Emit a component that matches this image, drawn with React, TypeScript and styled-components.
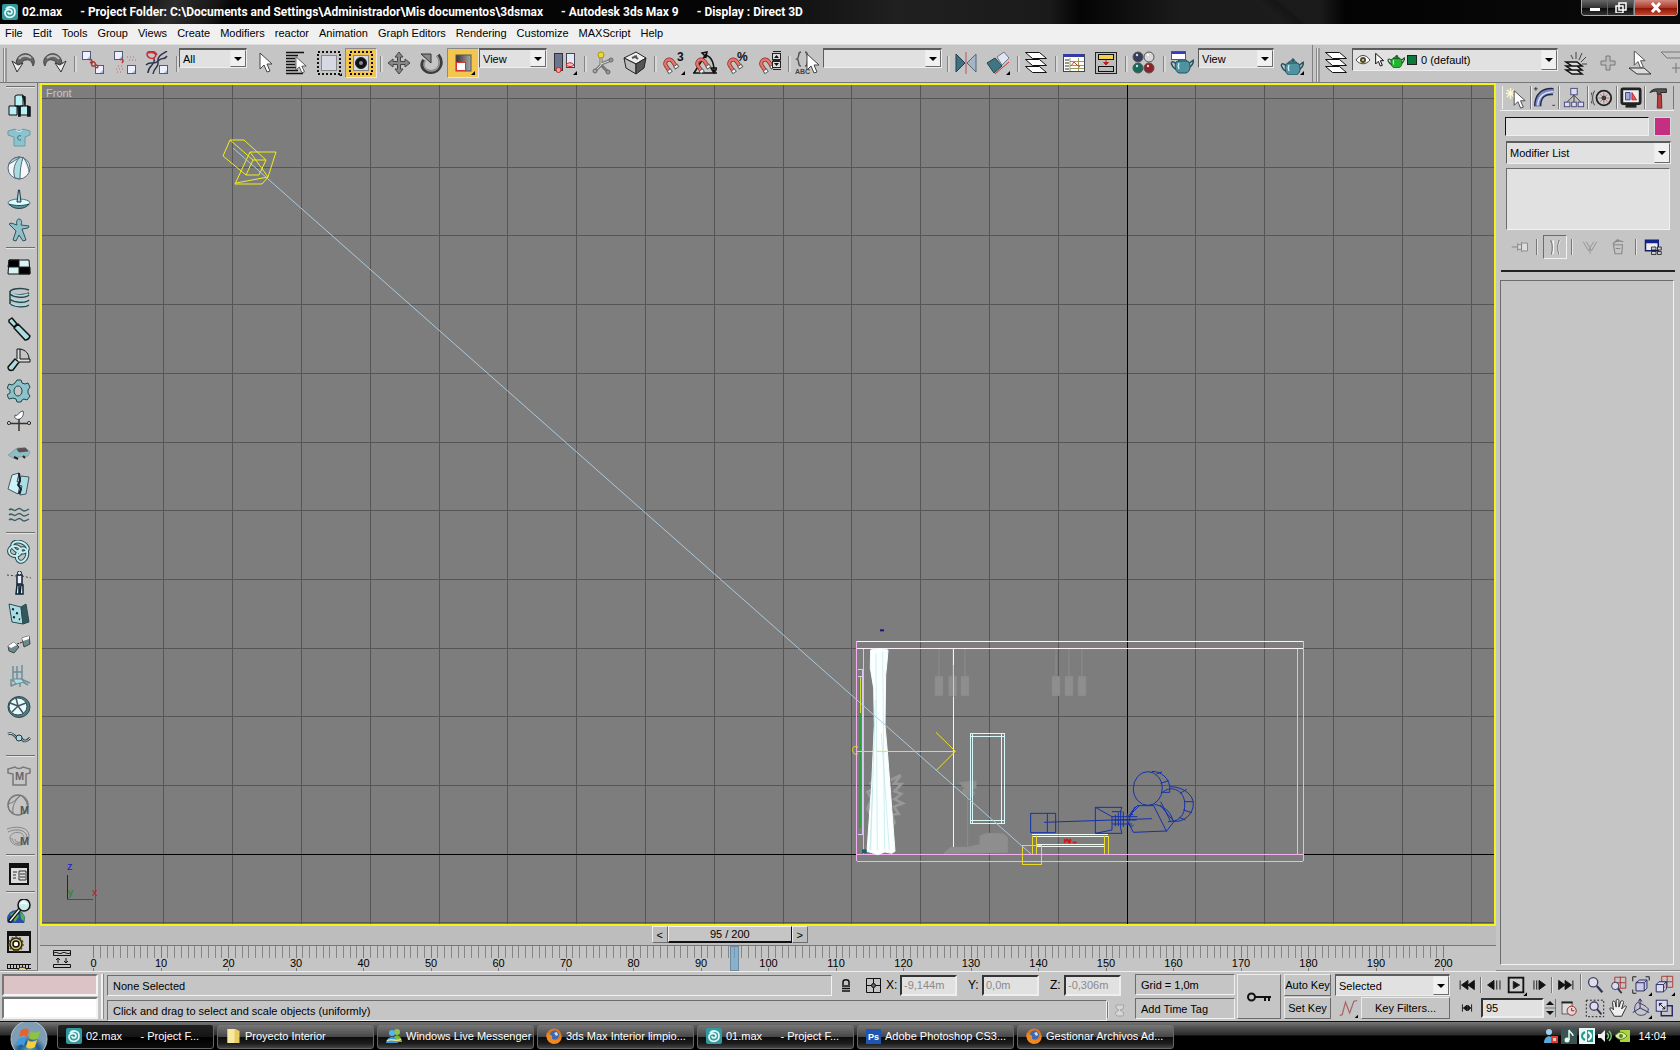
import React from 'react';
import styled, { createGlobalStyle, css } from 'styled-components';

const GlobalStyle = createGlobalStyle`
  *, *::before, *::after { box-sizing: border-box; }
  body { margin: 0; background: #c5c5c5; }
  body, button, input, select {
    font-family: "Liberation Sans", Arial, sans-serif;
    font-size: 11px;
    line-height: 14px;
    color: #000;
  }
  button { padding: 0; border: 0; background: none; cursor: default; white-space: nowrap; }
  svg { display: block; flex: none; }
`;

const sunken = css`
  border: 1px solid;
  border-color: #6c6c6c #f2f2f2 #f2f2f2 #6c6c6c;
`;
const raised = css`
  border: 1px solid;
  border-color: #ececec #6c6c6c #6c6c6c #ececec;
`;

const Page = styled.div`
  display: flex;
  flex-direction: column;
  min-height: 100vh;
  background: #c5c5c5;
  overflow: hidden;
`;

/* ---------- title and menu ---------- */
const TitleBar = styled.header`
  display: flex;
  align-items: flex-start;
  height: 24px;
  padding: 0 2px;
  color: #fff;
  background:
    linear-gradient(40deg, transparent 62%, #1c1c1c 64%, #151515 70%, transparent 72%) 1100px 0 / 260px 24px no-repeat,
    linear-gradient(115deg, transparent 12%, #2d2d2d 40%, #161616 62%, transparent 70%) 100px 0 / 180px 24px no-repeat,
    linear-gradient(90deg, #050505 0, #050505 700px, #202020 900px, #1a1a1a 1050px, #040404 1080px, #1b1b1b 1180px, #1b1b1b 1320px, #030303 1345px, #0a0a0a 100%);
`;
const TitleIcon = styled.div`
  padding-top: 4px;
  width: 20px;
`;
const TitleText = styled.h1`
  display: flex;
  flex: 1;
  gap: 18px;
  margin: 0;
  padding-top: 5px;
  font-family: Roboto, "Liberation Sans", sans-serif;
  font-size: 12px;
  line-height: 14px;
  font-weight: bold;
  white-space: pre;
`;
const WindowButtons = styled.div`
  display: flex;
  height: 16px;
  border: 1px solid #aaa;
  border-top: 0;
  border-radius: 0 0 4px 4px;
  overflow: hidden;
`;
const WindowButton = styled.button<{ $close?: boolean }>`
  display: grid;
  place-items: center;
  width: ${p => (p.$close ? 43 : 26)}px;
  border-left: ${p => (p.$close ? 1 : 0)}px solid #999;
  border-right: ${p => (p.$close ? 0 : 1)}px solid #666;
  background: ${p => (p.$close ? 'linear-gradient(#d08a80, #b23a28 50%, #8c1408 55%, #c2452d)' : 'linear-gradient(#666, #333 50%, #0a0a0a 55%, #333)')};
`;
const MenuBar = styled.nav`
  display: flex;
  align-items: center;
  gap: 10px;
  height: 20px;
  padding: 0 5px 2px;
  background: #f0f0f0;
`;

/* ---------- main toolbar ---------- */
const Toolbar = styled.div`
  display: flex;
  align-items: flex-start;
  height: 39px;
  border-top: 1px solid #dedede;
  border-bottom: 1px solid #777;
  overflow: hidden;
`;
const ToolGroup = styled.div<{ $last?: boolean }>`
  display: flex;
  flex: none;
  align-items: flex-start;
  height: 38px;
  padding: 3px ${p => (p.$last ? 0 : 4)}px 0 3px;
  border-right: ${p => (p.$last ? 0 : 1)}px solid #808080;
`;
const Grip = styled.span`
  width: 4px;
  height: 34px;
  border-left: 1px solid #888;
  border-right: 2px solid #999;
  background: #e2e2e2;
`;
const ToolButton = styled.button<{ $on?: boolean }>`
  display: grid;
  flex: none;
  place-items: center;
  width: 32px;
  height: 30px;
  ${p => p.$on && css`background: #f3c64f; border: 1px solid; border-color: #8a8a8a #e8e8e8 #e8e8e8 #8a8a8a;`}
`;
const ToolSep = styled.span`
  flex: none;
  width: 6px;
  height: 16px;
  margin-top: 8px;
  border-right: 2px solid #d8d8d8;
  background: linear-gradient(90deg, transparent 3px, #858585 3px);
`;
const SelectFrame = styled.span<{ $w?: number; $h?: number }>`
  display: flex;
  flex: none;
  align-items: stretch;
  width: ${p => (p.$w ? p.$w + 'px' : 'auto')};
  height: ${p => p.$h ?? 20}px;
  margin-right: ${p => (p.$w ? 2 : 0)}px;
  border: 1px solid;
  border-color: #5c5c5c #eee #eee #5c5c5c;
  border-top-width: 2px;
  background: #e1e1e1;
`;
const SelectInput = styled.select`
  flex: 1;
  min-width: 0;
  appearance: none;
  border: 0;
  outline: 0;
  padding: 0 3px;
  background: transparent;
`;
const SelectArrow = styled.span`
  display: grid;
  place-items: center;
  width: 16px;
  ${raised}
  background: #f0f0f0;
  pointer-events: none;
`;
const LayerMarks = styled.span`
  display: flex;
  align-items: center;
  padding-left: 2px;
`;

/* ---------- middle ---------- */
const Middle = styled.div`
  display: flex;
  flex: 1;
  min-height: 0;
`;
const Rail = styled.aside`
  display: flex;
  flex-direction: column;
  flex: none;
  width: 38px;
  height: calc(100vh - 162px);
  padding: 1px 0 0 2px;
  border-right: 1px solid #777;
  border-bottom: 1px solid #888;
  overflow: hidden;
`;
const RailButton = styled.button`
  display: grid;
  flex: none;
  place-items: center;
  width: 34px;
  height: 31px;
`;
const RailSep = styled.span`
  flex: none;
  height: 6px;
  margin: 0 2px 0 4px;
  background: linear-gradient(transparent 2px, #6e6e6e 2px, #6e6e6e 3px, #e4e4e4 3px, #e4e4e4 4px, transparent 4px);
`;
const Center = styled.main`
  display: flex;
  flex: 1;
  flex-direction: column;
  min-width: 0;
  padding-left: 2px;
`;
const Viewport = styled.section`
  position: relative;
  flex: 1;
  min-height: 0;
  background: #7d7d7d;
  border: 2px solid #f4f41c;
`;
const ViewLabel = styled.span`
  position: absolute;
  top: 1px;
  left: 4px;
  color: #c6c6c6;
`;
const Scene = styled.svg`
  width: 100%;
  height: 100%;
`;
const SliderRow = styled.div`
  display: flex;
  height: 19px;
  padding-right: 12px;
  background: #bdbdbd;
`;
const SliderStep = styled.button`
  width: 16px;
  height: 17px;
  ${raised}
`;
const SliderThumb = styled.button`
  width: 124px;
  height: 17px;
  border: 1px solid;
  border-color: #f0f0f0 #111 #111 #f0f0f0;
  border-bottom-width: 2px;
  background: #c5c5c5;
  line-height: 12px;
`;
const TrackBar = styled.div`
  display: flex;
  height: 26px;
  border-top: 1px solid #777;
`;
const TrackToggle = styled.button`
  display: grid;
  place-items: center;
  width: 43px;
`;
const Ticks = styled.div`
  display: flex;
  flex: 1;
  justify-content: space-between;
  margin: 0 52px 0 10px;
`;
const Tick = styled.div<{ $major?: boolean }>`
  position: relative;
  display: flex;
  flex-direction: column;
  align-items: center;
  width: 1px;
  height: ${p => (p.$major ? 25 : 12)}px;
  background: ${p => (p.$major ? 'linear-gradient(#7a7a7a 12px, transparent 12px, transparent 22px, #7a7a7a 22px)' : '#858585')};
  line-height: 12px;
  padding-top: 11px;
`;
const FrameMark = styled.span`
  position: absolute;
  top: 0;
  left: -4px;
  width: 9px;
  height: 25px;
  border: 1px solid #6b8ba0;
  background: rgba(110, 165, 205, 0.65);
`;

/* ---------- command panel ---------- */
const Panel = styled.aside`
  display: flex;
  flex: none;
  flex-direction: column;
  width: 184px;
  padding: 3px 6px 5px 4px;
  border-bottom: 1px solid #888;
`;
const Tabs = styled.div`
  display: flex;
  height: 25px;
  padding-left: 2px;
  border-bottom: 1px solid #eee;
`;
const Tab = styled.button`
  display: grid;
  place-items: center;
  flex: 0 1 29px;
  height: 23px;
  border-right: 1px solid #777;
  border-left: 1px solid #eee;
`;
const NameRow = styled.div`
  display: flex;
  gap: 5px;
  padding: 6px 3px 5px 5px;
`;
const NameInput = styled.input`
  flex: 1;
  min-width: 0;
  height: 19px;
  border: 1px solid;
  border-color: #111 #eee #eee #111;
  background: #e1e1e1;
`;
const Swatch = styled.button`
  width: 17px;
  height: 19px;
  background: #c42f82;
  border: 1px solid #d9d9d9;
`;
const PanelBlock = styled.div`
  display: flex;
  flex-direction: column;
  padding: 0 3px 0 6px;
`;
const StackList = styled.div`
  height: 62px;
  margin: 4px 1px 0 0;
  ${sunken}
  background: #e1e1e1;
`;
const StackTools = styled.div`
  display: flex;
  align-items: center;
  justify-content: space-between;
  height: 42px;
  padding: 0 10px 7px 7px;
  border-bottom: 2px solid #222;
  margin: 0 -1px 0 1px;
`;
const StackButton = styled.button<{ $boxed?: boolean }>`
  display: grid;
  place-items: center;
  width: 24px;
  height: 24px;
  ${p => p.$boxed && css`${sunken}`}
`;
const StackSep = styled.span`
  flex: none;
  width: 2px;
  height: 16px;
  border-left: 1px solid #777;
  border-right: 1px solid #e4e4e4;
`;
const Rollout = styled.div`
  flex: 1;
  margin-top: 8px;
  ${sunken}
`;

/* ---------- status bar ---------- */
const Status = styled.footer`
  display: flex;
  height: 50px;
  padding: 2px 5px 2px 2px;
  border-top: 1px solid #eee;
`;
const Column = styled.div<{ $w?: number; $gap?: number }>`
  display: flex;
  flex-direction: column;
  flex: ${p => (p.$w ? 'none' : 1)};
  min-width: 0;
  width: ${p => (p.$w ? p.$w + 'px' : 'auto')};
  gap: ${p => p.$gap ?? 1}px;
`;
const Row = styled.div<{ $gap?: number }>`
  display: flex;
  align-items: center;
  gap: ${p => p.$gap ?? 0}px;
  height: 22px;
`;
const Listener = styled.input<{ $tone: string }>`
  width: 96px;
  height: 22px;
  border: 2px solid;
  border-color: #777 #f4f4f4 #f4f4f4 #777;
  background: ${p => p.$tone};
`;
const StatusGrip = styled.span`
  flex: none;
  width: 9px;
  background: linear-gradient(90deg, transparent 3px, #f2f2f2 3px, #f2f2f2 5px, #888 5px, #888 6px, transparent 6px);
`;
const Readout = styled.div`
  flex: 1;
  height: 21px;
  padding: 3px 5px 2px;
  ${sunken}
  white-space: nowrap;
`;
const Coords = styled.div`
  display: flex;
  gap: 11px;
  padding-right: 10px;
`;
const Coord = styled.label`
  display: grid;
  grid-template-columns: 13px 57px;
  align-items: center;
  gap: 1px;
  font-size: 12px;
`;
const CoordInput = styled.input`
  width: 57px;
  height: 21px;
  padding: 0 2px;
  border: 2px solid;
  border-color: #333 #eee #eee #333;
  background: #e1e1e1;
  color: #8a8a8a;
`;
const IconSlot = styled.button<{ $w: number }>`
  display: grid;
  flex: none;
  place-items: center;
  width: ${p => p.$w}px;
  height: 22px;
`;
const PushButton = styled.button<{ $tall?: boolean; $w?: number }>`
  display: grid;
  place-items: center;
  flex: none;
  width: ${p => (p.$w ? p.$w + 'px' : '100%')};
  height: ${p => (p.$tall ? 45 : 22)}px;
  ${raised}
`;
const Spacer = styled.span<{ $w: number }>`
  flex: none;
  width: ${p => p.$w}px;
`;
const FrameInput = styled.input`
  width: 63px;
  height: 20px;
  padding: 0 3px;
  border: 2px solid;
  border-color: #333 #eee #eee #333;
  background: #e1e1e1;
`;

/* ---------- taskbar ---------- */
const Taskbar = styled.footer`
  display: flex;
  align-items: center;
  gap: 3px;
  height: 29px;
  padding: 0 14px 0 8px;
  border-top: 1px solid #111;
  color: #fff;
  background: linear-gradient(#777 0, #4c4c4c 6px, #2a2a2a 13px, #000 14px, #000 100%);
`;
const StartButton = styled.button`
  flex: none;
  width: 46px;
  height: 28px;
`;
const TaskButton = styled.button<{ $active?: boolean }>`
  display: flex;
  flex: 0 1 157px;
  align-items: center;
  gap: 4px;
  min-width: 0;
  height: 25px;
  padding: 0 8px;
  border: 1px solid #666;
  border-radius: 3px;
  color: #fff;
  white-space: pre;
  background: ${p => (p.$active
    ? 'linear-gradient(#222, #151515 50%, #000 54%, #0c0c0c)'
    : 'linear-gradient(#777, #484848 50%, #0d0d0d 54%, #1c1c1c 80%, #444)')};
`;
const Tray = styled.div`
  display: flex;
  align-items: center;
  gap: 2px;
  margin-left: auto;
`;
const Clock = styled.time`
  padding-left: 5px;
`;

/* ---------- icons ---------- */
type IconProps = { children: React.ReactNode; s?: number; box?: string };
const I = ({ children, s = 24, box = '0 0 24 24' }: IconProps) => (
  <svg width={s} height={s} viewBox={box} fill="none" stroke="#222" strokeWidth="1" aria-hidden="true">{children}</svg>
);
const Down = () => <svg width="8" height="4" viewBox="0 0 8 4" aria-hidden="true"><path d="M0 0h8L4 4z" fill="#000" /></svg>;
const Corner = () => <path d="M24 20v4h-4z" fill="#000" stroke="none" />;
const teal = '#a9dde2';

const Undo = ({ flip = false }) => (
  <I><g transform={flip ? 'matrix(-1 0 0 1 24 0)' : undefined}>
    <path d="M5 12C6 3 14 1 19 4c5 3 5 8 3 11-1-5-4-7-7-6-3 0-4 2-5 5z" fill="#666" stroke="#444" />
    <path d="M8 8c3-4 8-4 12-1" stroke="#bbb" strokeWidth="2" />
    <path d="M1 10l5 11 6-9-5 2z" fill="#eee" stroke="#333" />
  </g></I>
);
const Sq = ({ x, y }: { x: number; y: number }) => (
  <g><rect x={x + 0.5} y={y + 0.5} width="8" height="8" fill="#eef0ff" stroke="#55597c" /><path d={`M${x + 5} ${y + 8}l3-3v3z`} fill="#a8b4da" stroke="none" /></g>
);
const Link = () => <I><Sq x={1} y={0} /><Sq x={14} y={14} /><path d="M8 9c3-2 4 2 1 3M11 11c3-1 5 3 2 4s-3-3-1-4M15 14c3 1 2 4-1 2" stroke="#a63a3a" strokeWidth="1.5" /></I>;
const Unlink = () => <I><Sq x={1} y={0} /><Sq x={14} y={14} /><path d="M7 9c3-2 4 1 2 3" stroke="#b33" strokeWidth="1.5" /><path d="M14 6h8M16 9h7M5 15h6M3 18h7M4 21h5" stroke="#bd6666" strokeDasharray="1 2" /></I>;
const Bind = () => <I><path d="M2 2c8-2 10 2 8 4-2 3-8 1-8-3s8-4 10 1" stroke="#c92c35" strokeWidth="1.5" /><path d="M3 22c0-8 8-8 6-14M8 23c1-7 6-6 5-12s4-8 9-11M1 14c5-5 7 1 12-4s6 0 9-5" stroke="#30344e" strokeWidth="1.5" /><Sq x={14} y={14} /></I>;
const Arrow = ({ x = 0, y = 0 }) => <path d={`M${x + 7} ${y + 2}v16l4-4 3 7 3-1-3-7h5z`} fill="#fff" stroke="#444" />;
const ByName = () => <I><path d="M1 1.5h18M1 4.5h12M1 7.5h9M1 10.5h9M1 13.5h9M1 16.5h10M1 19.5h12M1 22.5h17" stroke="#111" strokeWidth="1.5" /><g transform="translate(5 4) scale(.85)"><Arrow /></g></I>;
const Region = ({ on = false }) => (
  <I s={26} box="0 0 26 26">
    <rect x="2" y="2" width="22" height="22" stroke="#111" strokeWidth="2" strokeDasharray="2 2" />
    <rect x="5.5" y="5.5" width="15" height="15" fill="#d6d8e4" stroke="#888" />
    {on && <><circle cx="13" cy="13" r="5.5" fill="#111" /><circle cx="13" cy="13" r="2" fill="#889" stroke="none" /></>}
    {!on && <path d="M26 23v3h-3z" fill="#000" stroke="none" />}
  </I>
);
const Move = () => <I><path d="M12 1l4 5h-2.500v4.500H18V8l5 4-5 4v-2.500h-4.500V18H16l-4 5-4-5h2.500v-4.500H6V16l-5-4 5-4v2.500h4.500V6H8z" fill="#888" stroke="#444" /></I>;
const Rotate = () => <I><path d="M5 9c-4 6 0 12 7 12 8 0 13-9 7-17" stroke="#3c3c3c" strokeWidth="4" /><path d="M6 10c-3 5 1 10 6 10 7 0 11-8 6-15" stroke="#999" strokeWidth="1.500" /><path d="M2 3h10v9z" fill="#888" stroke="#333" /></I>;
const Scale = () => <I><defs><linearGradient id="sc"><stop stopColor="#333" /><stop offset="1" stopColor="#aaa" /></linearGradient></defs><rect x="5" y="4" width="15" height="16" fill="url(#sc)" stroke="#555" /><rect x="5.5" y="11.5" width="9" height="8" fill="#fff" stroke="#d33" /><Corner /></I>;
const Pivot = () => <I><rect x="1.5" y="2.500" width="8" height="17" fill="#6b7592" stroke="#333" /><rect x="13.5" y="2.500" width="8" height="14" fill="#e5e8f7" stroke="#445" /><circle cx="5.500" cy="19" r="2.500" fill="#f7a0a0" stroke="#c22" /><path d="M13 14c2-3 6-3 8 0-2 2-6 2-8 0z" fill="#fbb" stroke="#c22" /><Corner /></I>;
const Manip = () => <I><path d="M10 6v8l-6 6M10 13l10-4M10 14l7 7" stroke="#777" strokeWidth="3" /><path d="M10 6v8l-6 6M10 13l10-4" stroke="#ddd" /><circle cx="10" cy="4" r="3" fill="#ecd735" stroke="#a90" /><circle cx="20" cy="9" r="2" fill="#999" stroke="#666" /><circle cx="4" cy="20" r="2" fill="#aaa" stroke="#666" /><circle cx="17" cy="21" r="2" fill="#999" stroke="#666" /></I>;
const KeyCube = () => <I><path d="M1 7l12-6 10 6-10 6z" fill="#eee" /><path d="M1 7l12 6v10L3 17z" fill="#bbb" /><path d="M13 13l10-6-2 10-8 6z" fill="#555" /><path d="M9 7l5-2M11 5l4 3" stroke="#555" strokeWidth="2" /></I>;
const Magnet = ({ kind }: { kind: string }) => (
  <I>
    {kind === 'angle' && <path d="M1 22L13 3M0 22h24M11 4c6 0 10 6 10 16M9 2l5-1-1 5zM18 17l3 5 3-5z" stroke="#111" strokeWidth="1.500" />}
    <g transform="rotate(-35 8 14)">
      <path d="M5 20v-7a4 4 0 0 1 8 0v7" stroke="#862c28" strokeWidth="4" />
      <path d="M5 19v-6a4 4 0 0 1 8 0v6" stroke="#e5766c" strokeWidth="2.500" />
      <path d="M3 18h4v3H3zM11 18h4v3h-4z" fill="#fff" stroke="#666" />
    </g>
    {kind === '3' && <><text x="16" y="10" fontSize="12" fontWeight="bold" fill="#111" stroke="none">3</text><Corner /></>}
    {kind === '%' && <text x="12" y="10" fontSize="12" fontWeight="bold" fill="#111" stroke="none">%</text>}
    {kind === 'spin' && <><path d="M16 .500h8M16 18.500h8M15.500 9.500h8" stroke="#222" /><rect x="15.500" y="2.500" width="8" height="6" fill="#ddd" /><rect x="15.500" y="10.500" width="8" height="6" fill="#ddd" /><path d="M17 7l2.500-3L22 7zM17 12h5l-2.500 3z" fill="#111" stroke="none" /></>}
  </I>
);
const NamedSets = () => <I><path d="M6 1C2 1 5 7 2 8c3 1 0 7 4 7M10 1c4 0 1 6 4 7-3 1 0 7-4 7" stroke="#555" strokeWidth="1.5" /><text x="0" y="23" fontSize="7" fontWeight="bold" fill="#444" stroke="none">ABC</text><Arrow x={5} y={1} /></I>;
const Mirror = () => <I><path d="M2 3l9 9-9 9z" fill="#3d7183" stroke="#223f4a" /><path d="M22 3l-9 9 9 9z" fill="#a4b6c6" stroke="#567" /><path d="M12 1v22" stroke="#b55" /></I>;
const Align = () => <I><path d="M1 12l8-5 7 8-8 7z" fill="#3f7584" stroke="#244" /><path d="M11 6l7-5 5 6-7 7z" fill="#dde6f2" stroke="#778" /><path d="M9 23l14-12" stroke="#c33" /><Corner /></I>;
const Layers = () => <I><g fill="#fff" stroke="#111" strokeLinejoin="round"><path d="M1.500 15.500h14l7 6h-14z" /><path d="M1.500 8.500h14l7 6h-14z" /><path d="M1.500 1.500h14l7 6h-14z" /></g></I>;
const CurveEd = () => <I><rect x="1.500" y="3.500" width="21" height="17" fill="#fff" stroke="#445" /><path d="M2 4.500h20" stroke="#343aa8" strokeWidth="3" /><path d="M3 9h4M3 12h4M3 15h4M3 18h4" stroke="#333" /><path d="M8 7v13M8 10.500h14M8 14.500h14M8 17.500h14M16.500 7v13" stroke="#9a9a5a" /><path d="M9 15l3-4 3 3 3 2" stroke="#c42" /></I>;
const Schematic = () => <I><rect x="1.500" y="1.500" width="21" height="21" fill="#bdbdbd" stroke="#222" /><rect x="4.500" y="3.500" width="15" height="5" fill="#f2d24a" stroke="#111" /><rect x="4.500" y="15.500" width="15" height="5" fill="#bbb" stroke="#111" /><path d="M12 9v3M9.500 11.500h5L12 14z" fill="#b22" stroke="#b22" /></I>;
const Mats = () => <I>{[['#343c5c', 6, 6], ['#d9d9d9', 17, 6], ['#17695c', 6, 17], ['#8f2228', 17, 17]].map(([c, x, y]) => <g key={String(c)}><circle cx={x} cy={y} r="5" fill={String(c)} stroke="#555" /><circle cx={Number(x) - 1} cy={Number(y) - 2} r="1.200" fill="#fff" stroke="none" opacity=".8" /></g>)}</I>;
const Pot = ({ c = '#4f93a3', e = '#24515e' }) => <g><path d="M6 13c-3-4-6-2-4 1 1 3 3 4 6 5M19 12c2 0 3-3 5-3-1 4-3 7-6 8" stroke={e} strokeWidth="1.500" /><path d="M6 11c-2 6 0 10 3 11h7c4-1 5-6 3-11-3-2-10-2-13 0z" fill={c} stroke={e} /><path d="M8 10c1-3 8-3 9 0zM12 6h2v2h-2z" fill={c} stroke={e} /><path d="M9 12c-1 2-1 4 0 6" stroke="#cfe9ee" strokeWidth="1.500" /></g>;
const Render = () => <I><Pot /><rect x="1.500" y="0.500" width="14" height="8" fill="#fff" stroke="#556" /><path d="M2 2h13" stroke="#3c3bbd" strokeWidth="2" /></I>;
const Quick = () => <I><g transform="translate(0 2)"><Pot /></g><Corner /></I>;
const LayerNew = () => <I><path d="M2 19h11l5 4H8zM2 15h11l5 4H8zM2 11h11l5 4H8z" fill="#ddd" stroke="#111" strokeWidth="1.500" /><path d="M12 8V1M15 9l3-7M17 11l5-5M18 13h5M9 8L7 4" stroke="#444" /></I>;
const Plus = () => <I><path d="M10 5h4v5h5v4h-5v5h-4v-5H5v-4h5z" fill="#bbb" stroke="#777" /></I>;
const LayerPick = () => <I><path d="M1 17h15l7 6H9z" fill="#ddd" stroke="#333" /><g transform="translate(0 -2) scale(.9)"><Arrow /></g></I>;
const LayerHi = () => <I><path d="M1 1h20M1 1l6 6h14M16 12v10M12 17h8" stroke="#777" /></I>;

const G = ({ children }: { children: React.ReactNode }) => <g stroke="#2a4a52" fill={teal} strokeLinejoin="round">{children}</g>;
const rail: Record<string, React.ReactNode> = {
  boxes: <><path d="M8 2l2-1h6v11H8zM2 12h8v9H2zM13 12h8v9h-8z" fill="#b9f0f4" stroke="#111" /><path d="M15 2l3 1v9M10 12l3 1v9h-2M20 12l3 1v9h-3" fill="#123" stroke="#111" strokeWidth="1.500" /></>,
  shirt: <G><path d="M8 4c2 2 6 2 8 0l7 2v4l-5 2v9H7v-9l-6-2V6z" fill="#8cc4ce" stroke="#6b9aa5" /><path d="M9 5c2 2 4 2 6 0" stroke="#dff" fill="none" /><path d="M14 11c-4-2-5 5 0 4" fill="none" stroke="#3b6a74" /></G>,
  ball: <G><circle cx="12" cy="12" r="11" fill="#f4f8f8" stroke="#567" /><path d="M13 1C8 6 5 14 8 22l5 1c0-8 1-16 3-21zM2 8c4-2 8-5 11-7-4 0-9 2-11 7zM16 1c4 5 6 11 6 15" stroke="#567" /></G>,
  top: <G><ellipse cx="12" cy="16" rx="11" ry="4" fill="#dff" stroke="#4c7882" /><path d="M2 17c4 6 16 6 20 0-6 2-14 2-20 0z" fill="#5c929c" /><path d="M11.500 3l-1.500 12h4l-1.500-12z" stroke="#234" /></G>,
  man: <G><path d="M12 1c3 0 3 4 2 6l8 1-1 2-6 1 4 11-3 1-4-6-3 6-3-1 3-9-7-7 2-1 6 2c-1-3 0-6 2-6z" fill="#8fc0c9" stroke="#2d5560" /></G>,
  checker: <><path d="M2 5h20l1 14H1z" fill="#d7f3f5" stroke="#111" /><path d="M2 5h10v7H1zM12 12h11v7H12z" fill="#000" /></>,
  spring: <G><path d="M22 4C14 1 3 3 3 6s14 4 19 1M3 7c0 4 15 6 19 2M3 12c0 4 15 6 19 2M3 16c0 5 15 6 19 3M3 5v13" fill="none" stroke="#26454c" strokeWidth="1.500" /><path d="M4 7c5 3 12 3 17 1M4 12c5 3 12 3 17 1M4 17c5 3 12 3 17 1" fill="none" stroke={teal} strokeWidth="1.500" /></G>,
  damper: <G><path d="M2 3l3-2 5 6-3 3-5-5zM7 11l4-4 12 12c-1 3-3 4-5 4z" stroke="#111" strokeWidth="1.500" /></G>,
  hinge: <G><path d="M1 19l7-8 4 3-6 8c-3 1-5 0-5-3z" stroke="#111" strokeWidth="1.500" /><path d="M10 11V1h3v10h10v3H12" fill="#ddd" stroke="#111" /><path d="M13 1c6 1 9 5 9 10" fill="none" stroke="#111" /></G>,
  gear: <G><path d="M10 1h4l1 3 3 1 3-1 2 4-2 3v3l2 3-3 4-3-1-2 1-1 2h-4l-1-3-3-1-4 1-2-4 3-2v-3L0 9l2-4 3 1 3-2z" fill="#8cc2cb" stroke="#244" /><ellipse cx="11" cy="12" rx="4" ry="5" fill="#c5c5c5" stroke="#244" /></G>,
  vane: <><path d="M8 5c3 2 3-3 8-4 1 3 0 6-3 8-4 1-6-1-5-4z" fill="#fff" stroke="#456" /><path d="M12 9v12M0 13.500h24" stroke="#333" strokeWidth="1.500" /><circle cx="2" cy="13" r="1.500" fill="#fff" /><circle cx="22" cy="13" r="1.500" fill="#fff" /></>,
  car: <G><path d="M1 14c4-2 6-6 10-7h8l4 4-2 4-9 1-6 1z" fill="#8dbdc7" stroke="#8b9fa6" /><path d="M10 8l8-1 3 3-9 1z" fill="#634b50" stroke="#555" /><path d="M7 16l4 2M16 15l2 2" stroke="#222" strokeWidth="2" /></G>,
  brick: <G><path d="M5 3l7-2-2 9 4-1-3 13-10-5z" fill="#cdf3f6" stroke="#456" /><path d="M14 4l8 1-3 17-6 1 2-9-3-1z" stroke="#456" /><path d="M12 1l1 8-2 4 3 4-2 5" fill="none" stroke="#123" strokeWidth="2" /></G>,
  waves: <path d="M2 7c3-3 4 2 7 0s4-2 6 0 4 1 7-1M2 12c3-3 4 2 7 0s4-2 6 0 4 1 7-1M2 17c3-3 4 2 7 0s4-2 6 0 4 1 7-1" stroke="#3f5f66" strokeWidth="1.500" />,
  knot: <G><g fill="none" strokeWidth="4"><ellipse cx="13" cy="7" rx="8" ry="5" transform="rotate(20 13 7)" /><ellipse cx="8" cy="11" rx="6" ry="5" /><ellipse cx="15" cy="15" rx="5" ry="7" transform="rotate(20 15 15)" /></g><g fill="none" stroke="#c4eef0" strokeWidth="2"><ellipse cx="13" cy="7" rx="8" ry="5" transform="rotate(20 13 7)" /><ellipse cx="8" cy="11" rx="6" ry="5" /><ellipse cx="15" cy="15" rx="5" ry="7" transform="rotate(20 15 15)" /></g></G>,
  ragdoll: <><path d="M0 4l9 1M15 5l9 2" stroke="#444" strokeDasharray="2 2" /><path d="M10 4h5v9h-5z" fill="#eef" stroke="#123" strokeWidth="1.500" /><circle cx="12.500" cy="2" r="2" fill="#eef" stroke="#123" /><path d="M10 14h2v9H9zM14 14h2v9h-3z" fill="#dff" stroke="#123" strokeWidth="1.500" /></>,
  wall: <G><path d="M2 2l12 3 2 17L5 20z" /><path d="M14 5l5-3 3 18-6 2z" fill="#34575f" /><path d="M5 7l2 .5M9 11l2 .5M6 15l2 .5M12 17l1 .5" stroke="#123" strokeWidth="2" /></G>,
  cubes: <><path d="M1 13l6-4 5 5-5 6-5-2zM15 5l7-2 1 8-6 3z" fill="#6b898f" stroke="#444" /><path d="M1 13l6-4 3 3-6 3zM15 5l7-2v3l-6 2z" fill="#fff" stroke="none" /><path d="M10 11l6-2" strokeDasharray="2 1" /></>,
  chair: <G><path d="M6 2v15M10 2v14M15 1v15M6 8h9M5 17l9-2 9 4M4 15v7l9-4v5M13 16l8 5" fill="none" stroke="#6b8f97" strokeWidth="1.500" /><path d="M6 15h8l3 3-8 2z" stroke="#6b8f97" /></G>,
  wheel: <G><ellipse cx="12" cy="12" rx="11" ry="10.500" fill="#567a82" /><ellipse cx="11" cy="11.500" rx="9" ry="8.500" fill="#e8fafb" /><path d="M11 11L9 3M11 11l8-3M11 11l5 7M11 11l-6 6M11 11L3 8" stroke="#456" strokeWidth="1.500" /></G>,
  rope: <><path d="M1 8c5-2 6 2 9 4M14 12c3 5 6 3 9 0" stroke="#2a3b40" strokeWidth="2.500" /><path d="M1 8c5-2 6 2 9 4M14 12c3 5 6 3 9 0" stroke="#cde" /><circle cx="12" cy="12" r="3" fill={teal} stroke="#234" /></>,
  mshirt: <><path d="M8 4c2 2 6 2 8 0l7 2v4l-4 1v11H6V11l-5-1V6z" stroke="#777" strokeWidth="1.500" /><text x="8" y="17" fontSize="11" fontWeight="bold" fill="#666" stroke="none">M</text></>,
  mball: <><circle cx="11" cy="11" r="10" stroke="#777" strokeWidth="1.500" /><path d="M14 1C8 6 5 12 6 19M1 10c5-1 9-5 12-9M14 1c3 3 6 7 6 10" stroke="#777" /><text x="13" y="20" fontSize="11" fontWeight="bold" fill="#555" stroke="none">M</text></>,
  mrope: <><path d="M0 4c8-3 22-3 22 7 0 12-19 12-19 2 0-7 14-8 14 0 0 5-9 6-9 1M1 7c5-3 18-4 19 5 0 9-15 9-15 1" stroke="#888" /><text x="13" y="20" fontSize="11" fontWeight="bold" fill="#555" stroke="none">M</text></>,
  props: <><rect x="3" y="2" width="18" height="20" fill="#ddd" stroke="#111" strokeWidth="2" /><path d="M3 4h18" stroke="#111" strokeWidth="4" /><path d="M6 10h4M6 13h3M6 16h3M12 9h7v9h-7zM13 12h5M13 15h5" stroke="#333" /></>,
  look: <><circle cx="9" cy="20" r="9" fill="#2e4ea5" stroke="none" /><path d="M3 15l6-3 3 5-4 6zM13 13l4 3 1 7-4-3z" fill="#49b14f" stroke="none" /><path d="M13 10L2 23" stroke="#111" strokeWidth="4" /><path d="M13 10L3 22" stroke="#eee" strokeWidth="1.500" /><circle cx="17" cy="6" r="6" fill="#c7eeee" stroke="#111" strokeWidth="1.500" /><path d="M14 5c2-3 4-1 6 0" stroke="#fff" strokeWidth="2" /></>,
  camera: <><rect x="1" y="2" width="22" height="20" fill="#ccc" stroke="#111" strokeWidth="2" /><path d="M1 4h22" stroke="#111" strokeWidth="4" /><circle cx="9" cy="14" r="6" fill="#dfc666" stroke="#222" strokeWidth="1.500" /><circle cx="9" cy="14" r="7" stroke="#5b4c14" strokeDasharray="2 2" strokeWidth="1.500" /><circle cx="9" cy="14" r="3" fill="#fff" stroke="#111" strokeWidth="1.500" /></>,
  film: <><path d="M0 3.500h24M0 7.500h24" stroke="#111" /><path d="M0 5.500h24" stroke="#111" strokeDasharray="1 2" strokeWidth="3" /><path d="M11 8c3-3 8-2 10 2l-6 5z" fill="#e8cf86" stroke="#222" /></>,
};
const railGroups = [
  ['boxes', 'shirt', 'ball', 'top', 'man'],
  ['checker', 'spring', 'damper', 'hinge', 'gear', 'vane', 'car', 'brick', 'waves'],
  ['knot', 'ragdoll', 'wall', 'cubes', 'chair', 'wheel', 'rope'],
  ['mshirt', 'mball', 'mrope'],
  ['props'],
  ['look', 'camera', 'film'],
];

const tabs: [string, React.ReactNode][] = [
  ['Create', <><path d="M6 1v12M1 7h11M2 3l8 8M10 3l-8 8" stroke="#fff8cc" strokeWidth="1.500" /><g transform="translate(3 2)"><Arrow /></g></>],
  ['Modify', <><path d="M4 21C4 9 11 4 21 5" stroke="#23284a" strokeWidth="8" /><path d="M4 21C4 9 11 4 21 5" stroke="#7f8bc0" strokeWidth="5" /><path d="M4 20C5 10 10 6 21 5" stroke="#dfe4ff" strokeWidth="1.500" /><path d="M0 2h4M2 0v4M20 20h3" stroke="#333" /></>],
  ['Hierarchy', <><path d="M12 8v10M12 9L4 17M12 9l8 8" stroke="#333" /><rect x="8.500" y="1.500" width="7" height="7" fill="#d9dbf3" stroke="#447" /><rect x="1.500" y="16.500" width="6" height="5" fill="#d9dbf3" stroke="#447" /><rect x="9.500" y="16.500" width="5" height="5" fill="#d9dbf3" stroke="#447" /><rect x="16.500" y="16.500" width="6" height="5" fill="#d9dbf3" stroke="#447" /></>],
  ['Motion', <><circle cx="14" cy="12" r="8" stroke="#222" strokeWidth="2" fill="#ccc" /><path d="M14 6v12M8 12h12M10 8l8 8M18 8l-8 8" stroke="#b66" /><circle cx="14" cy="12" r="2" fill="#444" /><path d="M4 4c-3 5-3 11 0 16M1 6c-2 4-2 8 0 12" stroke="#333" /></>],
  ['Display', <><rect x="2" y="2" width="20" height="16" rx="1" fill="#eee" stroke="#222" strokeWidth="3" /><path d="M6 6h5v8H6z" fill="#aac" stroke="#33a" /><path d="M13 14V6l5 8z" fill="#e55" stroke="#b22" /><path d="M6 21h12" stroke="#222" strokeWidth="3" /></>],
  ['Utilities', <><path d="M1 6c3-4 6-4 9-4h9v4h-6v2H9V5C6 4 4 5 1 6z" fill="#555" stroke="#222" /><path d="M9.500 8h4l.5 15h-5z" fill="#b8403c" stroke="#622" /></>],
];

const MaxLogo = ({ s = 16 }) => (
  <svg width={s} height={s} viewBox="0 0 16 16" aria-hidden="true"><rect width="16" height="16" rx="2" fill="#2f9aa0" /><path d="M4 5c2-3 9-3 9 3 0 7-10 7-10 1 0-4 7-5 7-1 0 2-4 3-4 0" fill="none" stroke="#dff6f4" strokeWidth="1.800" /></svg>
);
const Fox = () => <svg width="16" height="16" viewBox="0 0 16 16" aria-hidden="true"><circle cx="8" cy="8" r="7.500" fill="#e2761b" /><circle cx="8.500" cy="7" r="4.500" fill="#3b69b5" /><path d="M1 4c0 3 4 2 5 4s-2 3 2 4 7-1 7-6c2 6-2 10-7 10S-1 11 1 4z" fill="#f08a1e" /><path d="M8 5l3-1 1 3-2 1z" fill="#cfe0f4" /></svg>;
const Folder = () => <svg width="15" height="16" viewBox="0 0 14 16" aria-hidden="true"><path d="M1 1h8l4 2v12H1z" fill="#e8cb63" /><path d="M1 1h7v14H1z" fill="#f8e9a0" /></svg>;
const Msn = () => <svg width="16" height="16" viewBox="0 0 16 16" aria-hidden="true"><circle cx="11" cy="4" r="3" fill="#8ec64a" /><path d="M7 14c0-9 8-8 9 0z" fill="#7ab83c" /><circle cx="6" cy="5" r="3" fill="#5bb6e8" /><path d="M0 15C1 7 11 7 12 15z" fill="#3a9bdc" /><path d="M1 13c4-4 9 2 14-2" fill="none" stroke="#f3e28a" strokeWidth="1.500" /></svg>;
const Ps = () => <svg width="15" height="15" viewBox="0 0 15 15" aria-hidden="true"><rect width="15" height="15" fill="#1f55ae" /><text x="2" y="11" fontSize="9" fontWeight="bold" fill="#fff">Ps</text></svg>;
const tasks: [React.ReactNode, string][] = [
  [<MaxLogo />, '02.max      - Project F...'],
  [<Folder />, 'Proyecto Interior'],
  [<Msn />, 'Windows Live Messenger'],
  [<Fox />, '3ds Max Interior limpio...'],
  [<MaxLogo />, '01.max      - Project F...'],
  [<Ps />, 'Adobe Photoshop CS3...'],
  [<Fox />, 'Gestionar Archivos Ad...'],
];

const Combo = ({ label, value, w, h, marks }: { label: string; value: string; w?: number; h?: number; marks?: React.ReactNode }) => (
  <SelectFrame $w={w} $h={h}>
    {marks}
    <SelectInput aria-label={label} defaultValue={value}><option>{value}</option></SelectInput>
    <SelectArrow><Down /></SelectArrow>
  </SelectFrame>
);
const T = ({ label, on, children }: { label: string; on?: boolean; children: React.ReactNode }) => (
  <ToolButton type="button" aria-label={label} $on={on}>{children}</ToolButton>
);

const menus = ['File', 'Edit', 'Tools', 'Group', 'Views', 'Create', 'Modifiers', 'reactor', 'Animation', 'Graph Editors', 'Rendering', 'Customize', 'MAXScript', 'Help'];
const FRAME = 95;
const TOTAL = 200;

const ViewScene = () => {
  const xs = Array.from({ length: 21 }, (_, i) => Math.round(94.6 + i * 68.8));
  const ys = Array.from({ length: 13 }, (_, i) => Math.round(98 + i * 68.7));
  return (
    <Scene viewBox="42 85 1452 839" preserveAspectRatio="none" fill="none" role="img" aria-label="Front view wireframe">
      <g stroke="#565656" shapeRendering="crispEdges">
        {xs.map(x => <path key={x} d={`M${x + 0.5} 85V924`} />)}
        {ys.map(y => <path key={y} d={`M42 ${y + 0.5}H1494`} />)}
      </g>
      <path d="M1127.500 85V924M42 854.500H1494" stroke="#000" shapeRendering="crispEdges" />
      <path d="M230 140h14l22 20-7 15h-13l-23-19zM230 140l23 20h13M253 160l-7 15M250 152h26l-8 25-6 7h-27zM236 183l32-6M250 152l18 25" stroke="#f0ee1a" />
      <g transform="translate(840 620) scale(.33333)" strokeWidth="3">
        <path d="M120 31h12" stroke="#15157c" strokeWidth="6" />
        <g fill="#8e8e8e" stroke="#8e8e8e">
          {[297, 338, 375, 648, 687, 726].map(x => <path key={x} d={`M${x} 87v82M${x - 11} 170h22v56h-22z`} />)}
          <path d="M383 520v165M358 488l50-5v20l-10 8 8 8-10 12-20-4-10-14 8-8z" />
          <path d="M312 700l20-18h50l38-8v-26l20-8 50 2 12 10v45z" />
        </g>
        <path d="M152 480l30-14-20 26 22 0-20 22 20 8-20 16 24 12-26 10 14 22-20 2 8 24-12 14M90 486l10 20-18 10 12 20-12 30 10 20" stroke="#989898" strokeWidth="8" />
        <g shapeRendering="crispEdges">
          <path d="M50 703V64h1340v660H50zM50 703h1340M50 85h1340M1372 85v618M70 85v618M340 85v595" stroke="#f2b0f0" />
          <path d="M50 64h1340M50 85h1340M340 85v50M340 230v450" stroke="#faf0fa" />
          <path d="M53 148h15v495H53M53 170h15" stroke="#d8c8f0" />
          <path d="M61 170v455" stroke="#26a33c" strokeWidth="5" />
          <path d="M61 170v110" stroke="#c9e32a" />
          <path d="M391 340h103v271H391zM398 349h86v253h-86zM391 349h103M391 602h103M398 340v271M484 340v271" stroke="#d6f8f8" />
          <path d="M50 394h295" stroke="#eadf24" />
        </g>
        <path d="M54 382c-10-6-18 0-16 10s10 14 16 8M288 337l58 57-57 57" stroke="#eadf24" />
        <path d="M92 90l26-4 26 4-3 36-4 40-2 150 8 90 22 288-10 6-20-4-22 8-18-6-14-4 14-200 8-180-2-110-10-60z" fill="#fbffff" stroke="#f7ffff" />
        <path d="M108 100l4 590M128 95l6 595M106 240l-14 450M124 340l24 350M98 500l-8 190" stroke="#b9e6ea" strokeWidth="2" />
        <path d="M110 394h32" stroke="#eadf24" />
        <path d="M66 688h14v12H66z" fill="#1f5c6c" />
        <path d="M572 580h75v58h-75zM622 580v58M612 607l324-11M766 562h80l-4 10v54l4 14h-80zM766 562l50 28v40l-50 10M846 575h-30M816 590h76M816 612h60M820 600h70M826 585v34M835 578v40M850 575v46M862 580v36M870 585l30-30M885 560l-14 30" stroke="#1431a8" />
        <path d="M923 455a43 50 0 1 0 1 101a43 50 0 1 0-1-101zM935 454c30 0 52 22 54 46v17h-26M950 461l16-5M962 490l24-8M943 553c40 8 50 30 57 50M990 500c34 0 70 20 70 52s-30 55-58 52M1020 520l20-12M1032 545h28M1030 570l26 8M1018 592l18 8M940 555l40 80M960 555l42 50-22 28-100 4-14-28 8-34 18-18h48M968 517c20-20 62-12 66 30s-22 60-50 58M962 545l30 60M880 585a12 18 0 1 0 1 30" stroke="#1431a8" />
        <g shapeRendering="crispEdges">
          <path d="M577 645h228M577 650h228M590 675h204M590 680h204" stroke="#f2faf4" />
          <path d="M577 648v55M590 648v55M794 648v55M805 648v55M547 676h58v58h-58z" stroke="#ead92a" />
        </g>
        <path d="M674 656v14M680 656l8 14M690 656v14M676 662h18M698 667h12" stroke="#d01818" strokeWidth="5" />
      </g>
      <path d="M233 148L1031 854" stroke="#a9cbdd" />
      <g shapeRendering="crispEdges"><path d="M67.500 875v25" stroke="#1616b8" /><path d="M67 899.500h26" stroke="#b81e1e" /></g>
      <text x="67" y="870" fontSize="11" fill="#2020c8">z</text>
      <text x="92" y="896" fontSize="11" fill="#c02020">x</text>
      <text x="68" y="896" fontSize="10" fill="#148a20">y</text>
    </Scene>
  );
};

const skip = (d: string) => <path d={d} fill="#111" stroke="#111" />;
const nav: Record<string, React.ReactNode> = {
  first: skip('M4.500 7v10M6 12l7-5v10zM13 12l7-5v10z'),
  prev: skip('M5 12l7-5v10zM15 7v10M18.500 7v10'),
  next: skip('M19 12l-7-5v10zM6.500 7v10M9.500 7v10'),
  last: skip('M19.500 7v10M18 12l-7-5v10zM11 12L4 7v10z'),
  play: <><rect x="4" y="4" width="16" height="16" stroke="#111" strokeWidth="2" fill="#ccc" /><path d="M9 8v8l7-4z" fill="#111" /><Corner /></>,
  key: skip('M7 8v8M8 12l4-3v6zM17 8v8M16 12l-3-3v6z'),
  config: <><rect x="5.500" y="5.500" width="11" height="13" fill="#ddd" stroke="#555" /><path d="M5 6h12" strokeWidth="2" /><circle cx="16" cy="15" r="5" fill="#e9d5d5" stroke="#922" /><path d="M16 12v3h3" stroke="#722" /></>,
  zoom: <><circle cx="10" cy="9" r="5" fill="#dde" stroke="#446" strokeWidth="1.500" /><path d="M14 13l6 7" stroke="#335" strokeWidth="2.500" /></>,
  zoomAll: <><path d="M8.500 3.500h12v12h-12zM14.500 3v12M8 9.500h12" stroke="#a33" /><circle cx="9" cy="13" r="4" fill="#dde" stroke="#335" /><path d="M12 16l4 5" stroke="#335" strokeWidth="2" /></>,
  extents: <><path d="M3 8V3h4M17 3h4v4M3 17v4h4" stroke="#111" /><path d="M6.500 9.500h9v9h-9zM6.500 9.500l4-3h8l-3 3M18.500 6.500v9l-3 3" fill="#ccd" stroke="#226" /><Corner /></>,
  extentsAll: <><path d="M9.500 2.500h12v12h-12zM15.500 2v12M9 8.500h12" stroke="#a33" /><path d="M3.500 11.500h8v8h-8zM3.500 11.500l3-3h8l-3 3M14.500 8.500v8l-3 3" fill="#dde" stroke="#226" /><Corner /></>,
  region: <><rect x="2.500" y="3.500" width="19" height="18" stroke="#111" strokeDasharray="2 2" /><circle cx="11" cy="10" r="4.500" fill="#dde" stroke="#446" strokeWidth="1.500" /><path d="M14 13l5 6" stroke="#335" strokeWidth="2" /></>,
  pan: <path d="M8 21l-5-8c0-2 3-1 4 1L6 6c0-2 2-2 3 0l1 5V4c0-2 3-2 3 0v7l2-6c1-2 3-1 3 1l-2 7 3-3c2-1 3 0 1 3l-4 8z" fill="#eee" stroke="#222" />,
  arc: <><path d="M11 3v9l10 5M11 12l-8 5M9 5l2-3 2 3" stroke="#226" /><path d="M8 6c-4 4-4 10 0 13 6 3 12-1 12-6-3-4-8-6-12-7" stroke="#336" /><Corner /></>,
  minmax: <><rect x="3.500" y="3.500" width="12" height="12" fill="#dde" stroke="#226" /><path d="M15 9.500h6v11H9v-5" stroke="#226" strokeWidth="1.500" /><path d="M7 7l6 6M7 10V7h3M13 10v3h-3" stroke="#111" /></>,
};
const N = ({ id, w = 23 }: { id: string; w?: number }) => <IconSlot $w={w} type="button" aria-label={id}><I s={22}>{nav[id]}</I></IconSlot>;

export default function App() {
  return (
    <Page>
      <GlobalStyle />
      <TitleBar>
        <TitleIcon><MaxLogo /></TitleIcon>
        <TitleText><span>02.max</span><span>- Project Folder: C:\Documents and Settings\Administrador\Mis documentos\3dsmax</span><span>- Autodesk 3ds Max 9</span><span>- Display : Direct 3D</span></TitleText>
        <WindowButtons>
          <WindowButton type="button" aria-label="Minimize"><svg width="12" height="10"><path d="M1 5h10v3H1z" fill="#fff" /></svg></WindowButton>
          <WindowButton type="button" aria-label="Restore"><svg width="12" height="11"><path d="M4 1h7v7H4zM1 4h7v7H1z" fill="#333" stroke="#fff" strokeWidth="1.500" /></svg></WindowButton>
          <WindowButton type="button" aria-label="Close" $close><svg width="12" height="11"><path d="M2 1l8 9M10 1L2 10" stroke="#fff" strokeWidth="3" /></svg></WindowButton>
        </WindowButtons>
      </TitleBar>
      <MenuBar>{menus.map(m => <button type="button" key={m}>{m}</button>)}</MenuBar>
      <Toolbar>
        <ToolGroup>
          <Grip />
          <T label="Undo"><Undo /></T><T label="Redo"><Undo flip /></T><ToolSep />
          <T label="Link"><Link /></T><T label="Unlink"><Unlink /></T><T label="Bind to Space Warp"><Bind /></T><ToolSep />
          <Combo label="Selection filter" value="All" w={68} />
          <T label="Select"><I><Arrow /></I></T><T label="Select by name"><ByName /></T><T label="Rectangular region"><Region /></T><T label="Window crossing" on><Region on /></T><ToolSep />
          <T label="Move"><Move /></T><T label="Rotate"><Rotate /></T><T label="Scale" on><Scale /></T>
          <Combo label="Reference coordinates" value="View" w={68} />
          <T label="Pivot center"><Pivot /></T><ToolSep />
          <T label="Manipulate"><Manip /></T><T label="Keyboard override"><KeyCube /></T><ToolSep />
          <T label="Snap"><Magnet kind="3" /></T><T label="Angle snap"><Magnet kind="angle" /></T><T label="Percent snap"><Magnet kind="%" /></T><T label="Spinner snap"><Magnet kind="spin" /></T><ToolSep />
          <T label="Edit named sets"><NamedSets /></T>
          <Combo label="Named selection sets" value="" w={119} /><ToolSep />
          <T label="Mirror"><Mirror /></T><T label="Align"><Align /></T><ToolSep />
          <T label="Layer manager"><Layers /></T><ToolSep />
          <T label="Curve editor"><CurveEd /></T><T label="Schematic view"><Schematic /></T><ToolSep />
          <T label="Material editor"><Mats /></T><ToolSep />
          <T label="Render scene"><Render /></T>
          <Combo label="Render type" value="View" w={76} />
          <T label="Quick render"><Quick /></T>
        </ToolGroup>
        <ToolGroup $last>
          <Grip />
          <T label="Layers"><Layers /></T>
          <Combo label="Layer" value="0 (default)" w={206} h={23} marks={
            <LayerMarks>
              <svg width="16" height="14" viewBox="0 0 16 14"><path d="M1 7c4-6 10-6 14 0-4 5-10 5-14 0z" fill="#fff" stroke="#444" /><circle cx="8" cy="7" r="3" fill="#554a1e" /><circle cx="8" cy="7" r="1" fill="#ddd" /></svg>
              <svg width="16" height="16" viewBox="0 0 24 24"><path d="M7 2v16l4-4 3 7 3-1-3-7h5z" fill="#fff" stroke="#111" strokeWidth="1.500" /></svg>
              <svg width="18" height="18" viewBox="0 0 24 24" fill="none"><Pot c="#23b331" e="#0c4d12" /></svg>
              <svg width="13" height="12" viewBox="0 0 13 12"><rect x="2.500" y="1.500" width="9" height="9" fill="#0b7a3c" stroke="#222" /></svg>
            </LayerMarks>} />
          <T label="Create layer"><LayerNew /></T><T label="Add to layer"><Plus /></T><T label="Select layer objects"><LayerPick /></T><T label="Highlight layer"><LayerHi /></T>
        </ToolGroup>
      </Toolbar>

      <Middle>
        <Rail>
          {railGroups.map(group => (
            <React.Fragment key={group[0]}>
              <RailSep />
              {group.map(name => <RailButton type="button" key={name} aria-label={name}><I>{rail[name]}</I></RailButton>)}
            </React.Fragment>
          ))}
        </Rail>
        <Center>
          <Viewport><ViewScene /><ViewLabel>Front</ViewLabel></Viewport>
          <SliderRow>
            <span style={{ flexGrow: FRAME }} />
            <SliderStep type="button">&lt;</SliderStep>
            <SliderThumb type="button">{FRAME} / {TOTAL}</SliderThumb>
            <SliderStep type="button">&gt;</SliderStep>
            <span style={{ flexGrow: TOTAL - FRAME }} />
          </SliderRow>
          <TrackBar>
            <TrackToggle type="button" aria-label="Open mini curve editor">
              <svg width="18" height="18" viewBox="0 0 18 18" fill="none" stroke="#111"><path d="M.5.5h17v5H.5zM1 3c3-2 5 2 8 0s5 2 8 0M.5 14.500h17v3H.5zM5 13V8M3 10l2-2 2 2M13 8v5M11 11l2 2 2-2" /></svg>
            </TrackToggle>
            <Ticks>
              {Array.from({ length: TOTAL + 1 }, (_, i) => (
                <Tick key={i} $major={i % 10 === 0}>{i % 10 === 0 && i}{i === FRAME && <FrameMark />}</Tick>
              ))}
            </Ticks>
          </TrackBar>
        </Center>
        <Panel>
          <Tabs>{tabs.map(([n, g]) => <Tab type="button" key={n} aria-label={n}><I s={22}>{g}</I></Tab>)}</Tabs>
          <NameRow><NameInput aria-label="Object name" /><Swatch type="button" aria-label="Object color" /></NameRow>
          <PanelBlock>
            <Combo label="Modifier" value="Modifier List" h={23} />
            <StackList />
          </PanelBlock>
          <StackTools>
            <StackButton type="button" aria-label="Pin stack"><I s={18}><g stroke="#777"><path d="M1 12h8M9 7v10M9 9h5v6H9M14 6c3 2 5 0 8 1v10c-3 1-5-1-8 1z" fill="#ddd" /></g></I></StackButton>
            <StackSep />
            <StackButton type="button" aria-label="Show end result" $boxed><I s={18}><path d="M7 3c3 3 3 15 1 19M10 3v18M19 3c-3 3-3 15-1 19M16 4v18" stroke="#f4f4f4" strokeWidth="1.500" /><path d="M6 3c3 3 3 15 1 19M18 3c-3 3-3 15-1 19" stroke="#777" strokeWidth="1.500" /></I></StackButton>
            <StackSep />
            <StackButton type="button" aria-label="Make unique"><I s={18}><path d="M3 5l7 12 2-3 2 3 7-12M7 5l5 8 5-8M12 13v8" stroke="#888" /></I></StackButton>
            <StackButton type="button" aria-label="Remove modifier"><I s={18}><path d="M6 9h12l-1 12H8zM5 8c4-5 9-5 14-3M9 5c1-4 5-3 5 0M9 14h6" stroke="#888" strokeWidth="1.500" /></I></StackButton>
            <StackSep />
            <StackButton type="button" aria-label="Configure modifier sets"><I s={18}><rect x="2" y="3" width="17" height="14" fill="#eee" stroke="#12226e" strokeWidth="2" /><path d="M2 5h17" stroke="#12228e" strokeWidth="4" /><path d="M10 12h6v4h-6zM18 12h5v4h-5zM10 18h6v4h-6zM18 18h5v4h-5z" fill="#ccc" stroke="#111" /></I></StackButton>
          </StackTools>
          <Rollout />
        </Panel>
      </Middle>

      <Status>
        <Column $w={96}>
          <Listener $tone="#dcc3c6" aria-label="Macro recorder" />
          <Listener $tone="#ffffff" aria-label="Script listener" />
        </Column>
        <StatusGrip />
        <Column $gap={3}>
          <Row>
            <Readout>None Selected</Readout>
            <IconSlot $w={28} type="button" aria-label="Lock selection"><svg width="10" height="13" viewBox="0 0 10 13"><path d="M2 6V3c0-3 6-3 6 0v3" fill="none" stroke="#111" strokeWidth="1.500" /><path d="M1 7h8M1 9.500h8M1 12h8" stroke="#111" strokeWidth="1.500" /></svg></IconSlot>
            <IconSlot $w={26} type="button" aria-label="Absolute mode"><svg width="15" height="15" viewBox="0 0 15 15" fill="none" stroke="#111"><path d="M.5.5h14v14H.5zM7.500 0v15M0 7.500h15" /><circle cx="7.500" cy="7.500" r="2" fill="#666" /></svg></IconSlot>
            <Coords>
              <Coord>X:<CoordInput defaultValue="-9,144m" /></Coord>
              <Coord>Y:<CoordInput defaultValue="0,0m" /></Coord>
              <Coord>Z:<CoordInput defaultValue="-0,306m" /></Coord>
            </Coords>
          </Row>
          <Row>
            <Readout>Click and drag to select and scale objects (uniformly)</Readout>
            <StackSep />
            <IconSlot $w={22} type="button" aria-label="Communication center"><svg width="12" height="14" viewBox="0 0 12 14" fill="none"><path d="M2 2h8l-1 4-3 1 4 3-1 3H3L1 10l4-3-3-2z" fill="#d6d6d6" stroke="#a5a5a5" /></svg></IconSlot>
          </Row>
        </Column>
        <Spacer $w={4} />
        <Column $w={100} $gap={3}>
          <Row><Readout>Grid = 1,0m</Readout></Row>
          <Row><Readout>Add Time Tag</Readout></Row>
        </Column>
        <Spacer $w={2} />
        <PushButton type="button" $tall $w={44} aria-label="Set keys"><svg width="24" height="12" viewBox="0 0 24 12" fill="none" stroke="#111" strokeWidth="2"><circle cx="4.500" cy="6" r="3.500" /><path d="M8 6h16M18 6v4M22 6v4" /></svg></PushButton>
        <Spacer $w={3} />
        <Column $w={47}><PushButton type="button">Auto Key</PushButton><PushButton type="button">Set Key</PushButton></Column>
        <Spacer $w={4} />
        <Column $w={115}>
          <Combo label="Key set" value="Selected" h={22} />
          <Row>
            <IconSlot $w={26} type="button" aria-label="Tangent type"><I s={20}><path d="M2 21l3-1 4-15 5 13 5-14 4-1" stroke="#a66" strokeWidth="1.500" /><Corner /></I></IconSlot>
            <PushButton type="button" $w={89}>Key Filters...</PushButton>
          </Row>
        </Column>
        <Spacer $w={3} />
        <Column $w={126}>
          <Row><N id="first" w={27} /><StackSep /><N id="prev" w={23} /><N id="play" w={22} /><N id="next" w={24} /><StackSep /><N id="last" w={26} /></Row>
          <Row $gap={1}><N id="key" w={27} /><FrameInput aria-label="Current frame" defaultValue="95" />
            <svg width="11" height="18" viewBox="0 0 11 18"><path d="M1 6h8L5 2zM1 12h8l-4 4z" fill="#111" /><path d="M0 9h11M10.500 0v18" stroke="#777" /></svg>
            <N id="config" w={22} /></Row>
        </Column>
        <Spacer $w={1} /><StackSep /><Spacer $w={1} />
        <Column $w={92}>
          <Row><N id="zoom" /><N id="zoomAll" /><N id="extents" /><N id="extentsAll" /></Row>
          <Row><N id="region" /><N id="pan" /><N id="arc" /><N id="minmax" /></Row>
        </Column>
      </Status>

      <Taskbar>
        <StartButton type="button" aria-label="Start">
          <svg width="40" height="28" viewBox="0 0 40 28">
            <defs><radialGradient id="orb" cy="0.900"><stop stopColor="#5cc4f0" /><stop offset=".6" stopColor="#235a88" /><stop offset="1" stopColor="#7f9db4" /></radialGradient></defs>
            <circle cx="21" cy="17" r="18" fill="url(#orb)" stroke="#b4c6d2" />
            <path d="M13 8c3-2 6-2 8 0l-2 7c-2-2-5-2-8 0z" fill="#e8632c" /><path d="M23 9c2 2 5 2 9 0l-2 7c-4 2-6 2-9 0z" fill="#8cc63e" />
            <path d="M10 17c3-2 6-2 8 0l-2 7c-2-2-5-2-8 0z" fill="#3f9be0" /><path d="M20 18c2 2 5 2 9 0l-2 7c-4 2-6 2-9 0z" fill="#f7cf3a" />
          </svg>
        </StartButton>
        {tasks.map(([icon, label], i) => <TaskButton type="button" key={label} $active={i === 0}>{icon}{label}</TaskButton>)}
        <Tray>
          <svg width="16" height="16" viewBox="0 0 16 16"><circle cx="6" cy="4" r="3" fill="#9fd0ee" /><path d="M1 15c0-9 10-9 10 0z" fill="#5ba8dc" /><rect x="8" y="8" width="7" height="7" fill="#d9402e" /><path d="M10 10h3v3h-3z" fill="#fff" opacity=".7" /></svg>
          <svg width="16" height="16" viewBox="0 0 16 16"><rect width="16" height="16" fill="#3d5254" /><path d="M8 12V2c1 3 4 3 4 6" fill="none" stroke="#dfe" strokeWidth="1.500" /><circle cx="6" cy="12" r="2.500" fill="#dfe" /></svg>
          <svg width="16" height="16" viewBox="0 0 16 16"><rect width="16" height="16" fill="#e8f6f4" /><path d="M8 2h6v12H8z" fill="#249a8c" /><path d="M6 4c-4 2-4 6 0 8" fill="none" stroke="#249a8c" strokeWidth="2" /><path d="M9 4c4 2 4 6 0 8" fill="none" stroke="#fff" strokeWidth="2" /></svg>
          <svg width="16" height="16" viewBox="0 0 16 16"><path d="M1 6h3l4-4v12l-4-4H1z" fill="#eee" /><path d="M10 5c2 2 2 4 0 6M12 3c3 3 3 7 0 10" fill="none" stroke="#6fca6f" strokeWidth="1.500" /></svg>
          <svg width="16" height="16" viewBox="0 0 16 16"><path d="M5 2h10v12H5z" fill="#a8d43c" /><path d="M0 8c4-6 9-4 12 0-4 4-8 5-12 0z" fill="#d9ecb0" stroke="#57801c" /><circle cx="6" cy="8" r="2" fill="#57801c" /></svg>
          <Clock>14:04</Clock>
        </Tray>
      </Taskbar>
    </Page>
  );
}
